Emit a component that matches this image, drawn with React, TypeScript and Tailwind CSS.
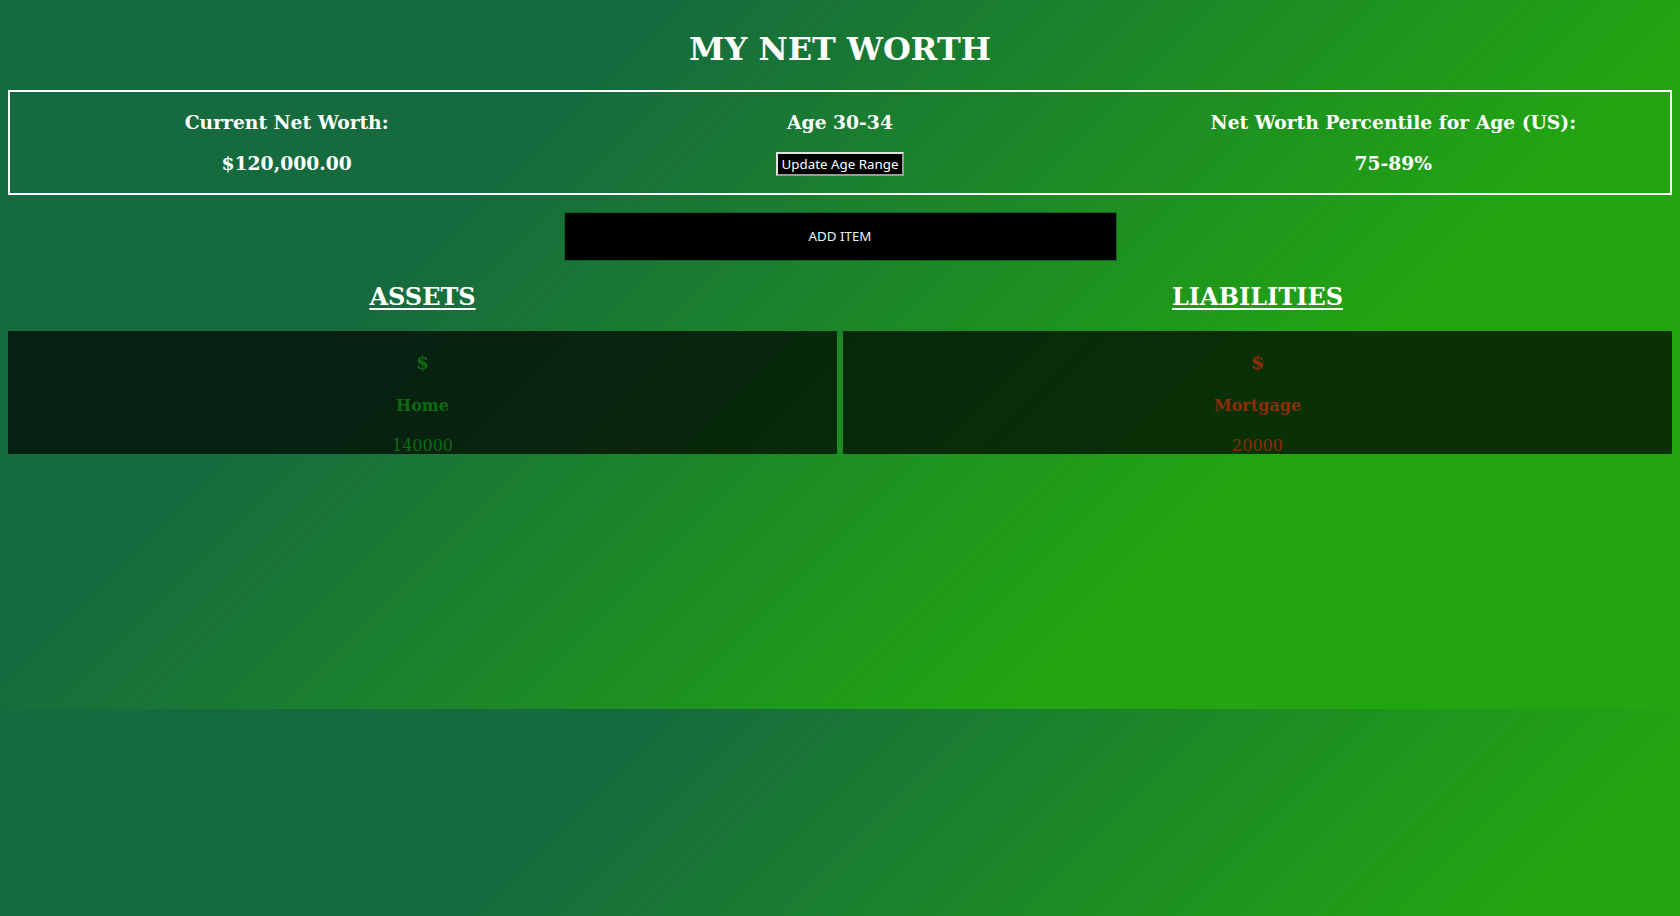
import { FC } from 'react';

type Item = {
  name: string;
  amount: string;
};

const stats = [
  { id: 1, title: 'Current Net Worth:', value: '$120,000.00' },
  { id: 2, title: 'Age 30-34', value: null },
  { id: 3, title: 'Net Worth Percentile for Age (US):', value: '75-89%' },
];

const ItemColumn: FC<{ title: string; items: Item[]; tone: string }> = ({ title, items, tone }) => {
  return (
    <div className="flex flex-col">
      <h2 className="text-center text-[24px] font-bold leading-[28px] underline underline-offset-[3px]">
        {title}
      </h2>
      <div className="mt-[20.4px] h-[123px] overflow-hidden bg-black/70">
        {items.map((item) => (
          <div key={item.name} className={`flex flex-col items-center ${tone}`}>
            <h3 className="mt-[19.5px] text-[18.72px] font-bold leading-[22px]">$</h3>
            <h3 className="mt-[23.5px] text-[16px] font-bold leading-[19px]">{item.name}</h3>
            <p className="mt-[20.7px] text-[16px] leading-[19px]">{item.amount}</p>
          </div>
        ))}
      </div>
    </div>
  );
};

export default function App() {
  return (
    <div className="min-h-[916px] w-full bg-[linear-gradient(135deg,#166b3e_28%,#22a511_72%)] bg-[length:100%_709px] bg-repeat font-['DejaVu_Serif',serif] text-white">
      <div className="h-[709px] px-2 pt-[31px]">
        <h1 className="text-center text-[32px] font-bold leading-[37px]">MY NET WORTH</h1>

        <div className="mt-[22px] grid grid-cols-3 border-2 border-white">
          {stats.map((stat) => (
            <div key={stat.id} className="flex flex-col items-center gap-[19px] py-[19px]">
              <h3 className="text-[18.72px] font-bold leading-[22px]">{stat.title}</h3>
              {stat.value ? (
                <h3 className="text-[18.72px] font-bold leading-[22px]">{stat.value}</h3>
              ) : (
                <div className="flex h-[22px] items-start">
                  <button className="h-[24px] border-2 border-t-[#e2e2e2] border-l-[#e2e2e2] border-r-[#9a9a9a] border-b-[#9a9a9a] bg-black px-[4px] font-['Noto_Sans',sans-serif] text-[13.33px] leading-[18px] text-white">
                    Update Age Range
                  </button>
                </div>
              )}
            </div>
          ))}
        </div>

        <div className="mt-[17px] flex justify-center">
          <button className="h-[49px] w-[553px] border border-[#146222] bg-black pt-px font-['Noto_Sans',sans-serif] text-[13.33px] text-[#f0f0f0]">
            ADD ITEM
          </button>
        </div>

        <div className="mt-[21.7px] grid grid-cols-2 gap-[6px]">
          <ItemColumn title="ASSETS" tone="text-[#0e6b12]" items={[{ name: 'Home', amount: '140000' }]} />
          <ItemColumn title="LIABILITIES" tone="text-[#8e2c07]" items={[{ name: 'Mortgage', amount: '20000' }]} />
        </div>
      </div>
    </div>
  );
}
